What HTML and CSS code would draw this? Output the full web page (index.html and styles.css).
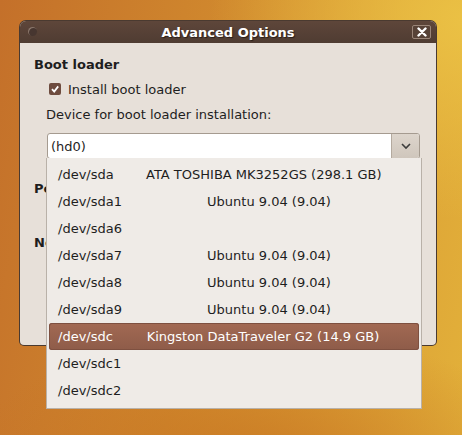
FILE: index.html
```html
<!DOCTYPE html>
<html>
<head>
<meta charset="utf-8">
<link rel="stylesheet" href="styles.css">
</head>
<body>
<div class="desktop">
  <div class="window">
    <div class="titlebar">
      <span class="menu-btn"></span>
      <span class="title">Advanced Options</span>
      <span class="close-btn">
        <svg width="10" height="10" viewBox="0 0 10 10"><path d="M1.5 1.5 L8.5 8.5 M8.5 1.5 L1.5 8.5" stroke="#fff" stroke-width="2.4" stroke-linecap="round"/></svg>
      </span>
    </div>
    <div class="content">
      <div class="section-title">Boot loader</div>
      <div class="check-row">
        <span class="checkbox">
          <svg width="12" height="12" viewBox="0 0 12 12"><path d="M3 6.2 L5.2 8.6 L9.2 3.4" fill="none" stroke="#fff" stroke-width="1.8"/></svg>
        </span>
        <span>Install boot loader</span>
      </div>
      <div class="label">Device for boot loader installation:</div>
      <div class="combo">
        <span class="combo-text">(hd0)</span>
        <span class="combo-btn">
          <svg width="12" height="8" viewBox="0 0 12 8"><path d="M2 2 L6 6 L10 2" fill="none" stroke="#3c3c3c" stroke-width="1.6"/></svg>
        </span>
      </div>
      <div class="section-title second">Popularity contest</div>
      <div class="section-title third">Network time</div>
    </div>
  </div>

  <div class="dropdown">
    <div class="row"><span class="dev">/dev/sda</span><span class="desc">ATA TOSHIBA MK3252GS (298.1 GB)</span></div>
    <div class="row"><span class="dev">/dev/sda1</span><span class="desc os">Ubuntu 9.04 (9.04)</span></div>
    <div class="row"><span class="dev">/dev/sda6</span><span class="desc"></span></div>
    <div class="row"><span class="dev">/dev/sda7</span><span class="desc os">Ubuntu 9.04 (9.04)</span></div>
    <div class="row"><span class="dev">/dev/sda8</span><span class="desc os">Ubuntu 9.04 (9.04)</span></div>
    <div class="row"><span class="dev">/dev/sda9</span><span class="desc os">Ubuntu 9.04 (9.04)</span></div>
    <div class="row selected"><span class="dev">/dev/sdc</span><span class="desc">Kingston DataTraveler G2 (14.9 GB)</span></div>
    <div class="row"><span class="dev">/dev/sdc1</span><span class="desc"></span></div>
    <div class="row"><span class="dev">/dev/sdc2</span><span class="desc"></span></div>
  </div>
</div>
</body>
</html>
```

FILE: styles.css
```css
html, body {
  margin: 0;
  padding: 0;
}
body {
  width: 462px;
  height: 435px;
  overflow: hidden;
  font-family: "DejaVu Sans", "Liberation Sans", sans-serif;
  font-size: 13px;
  color: #1e1e1e;
}
.desktop {
  position: relative;
  width: 462px;
  height: 435px;
  background:
    radial-gradient(ellipse 260px 200px at 470px 20px, rgba(236, 196, 70, 0.9), rgba(236, 196, 70, 0) 100%),
    radial-gradient(ellipse 300px 140px at 260px 470px, rgba(196, 110, 30, 0.7), rgba(196, 110, 30, 0) 100%),
    linear-gradient(100deg, #c4702a 0%, #d18a2e 45%, #dca035 75%, #e2b03a 100%);
}
.window {
  position: absolute;
  left: 20px;
  top: 21px;
  width: 416px;
  height: 324px;
  display: flex;
  flex-direction: column;
  border-radius: 6px 6px 4px 4px;
  background: #e7e0d9;
  box-shadow: 0 0 0 1px #4a3a30;
  overflow: hidden;
}
.titlebar {
  height: 22px;
  flex: none;
  display: flex;
  align-items: center;
  position: relative;
  background: linear-gradient(#5e463a, #4f3c32);
}
.menu-btn {
  position: absolute;
  left: 8px;
  top: 6px;
  width: 9px;
  height: 9px;
  border-radius: 50%;
  background: #473630;
  box-shadow: inset 1px 1px 0 #8a766a;
}
.title {
  flex: 1;
  text-align: center;
  color: #fff;
  font-weight: bold;
  font-size: 13px;
  text-shadow: 1px 1px 1px #2a1e18;
}
.close-btn {
  position: absolute;
  right: 5px;
  top: 4px;
  width: 19px;
  height: 14px;
  box-sizing: border-box;
  border: 1px solid #9a8578;
  border-radius: 2px;
  background: #574237;
  display: flex;
  align-items: center;
  justify-content: center;
}
.content {
  flex: 1;
  padding: 12px 15px 0 14px;
}
.section-title {
  font-weight: bold;
  height: 19px;
  line-height: 19px;
}
.check-row {
  display: flex;
  align-items: center;
  gap: 7px;
  margin-top: 5px;
  margin-left: 15px;
  height: 20px;
}
.checkbox {
  width: 12px;
  height: 12px;
  border-radius: 2px;
  background: #6e4c3f;
  display: flex;
}
.label {
  margin-top: 6px;
  margin-left: 12px;
  height: 20px;
  line-height: 20px;
}
.combo {
  margin-top: 8px;
  margin-left: 13px;
  width: 373px;
  height: 26px;
  box-sizing: border-box;
  border: 1px solid #a59b90;
  border-radius: 3px;
  background: #fff;
  display: flex;
  align-items: center;
  overflow: hidden;
}
.combo-text {
  flex: 1;
  padding-left: 3px;
}
.combo-btn {
  width: 27px;
  height: 100%;
  background: linear-gradient(#ddd5cc, #cfc6bc);
  border-left: 1px solid #b4aa9f;
  display: flex;
  align-items: center;
  justify-content: center;
}
.second {
  margin-top: 20px;
}
.third {
  margin-top: 35px;
}
.dropdown {
  position: absolute;
  left: 46px;
  top: 158px;
  width: 376px;
  box-sizing: border-box;
  padding: 3px 2px 4px 2px;
  background: #efebe7;
  border: 1px solid #b9b1a8;
  border-top: none;
  display: flex;
  flex-direction: column;
}
.row {
  height: 27px;
  display: flex;
  align-items: center;
  border-radius: 3px;
}
.dev {
  width: 88px;
  padding-left: 9px;
  flex: none;
}
.desc {
  width: 234px;
  text-align: center;
  white-space: nowrap;
}
.desc.os {
  padding-left: 6px;
}
.row.selected {
  background: linear-gradient(#a26953, #8e5c49);
  box-shadow: inset 0 0 0 1px #7e5040;
  color: #fff;
}
```
